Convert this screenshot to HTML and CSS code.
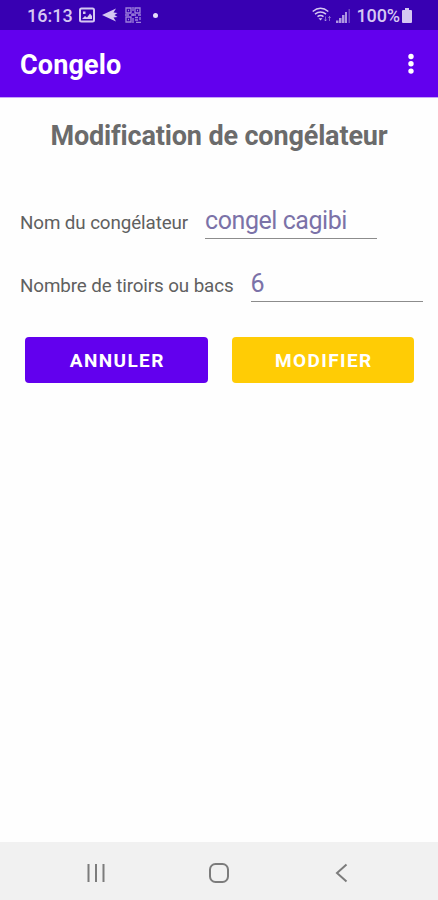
FILE: index.html
```html
<!DOCTYPE html>
<html lang="fr">
	<head>
		<meta charset="utf-8">
		<title>Congelo</title>
		<link rel="stylesheet" href="styles.css">
	</head>
	<body>
		<div class="status-bar">
			<span class="time">16:13</span>
			<svg class="icon-image" width="16" height="16" viewBox="0 0 16 16">
				<rect x="1" y="1.500" width="14" height="13" rx="1.500" fill="none" stroke="currentColor" stroke-width="2"/>
				<path d="M3 12l3-3 2 1.500 3-4 2 2.500v3z" fill="currentColor"/>
				<rect x="4" y="4.500" width="2.500" height="2.500" fill="currentColor"/>
			</svg>
			<svg class="icon-plane" width="16" height="14" viewBox="0 0 16 14">
				<path d="M0 7L14 .5 11.500 4.500l4 .5-3 2 3 2-4 .5 2.500 4z" fill="currentColor"/>
			</svg>
			<svg class="icon-code" width="16" height="16" viewBox="0 0 16 16" fill="none" stroke="currentColor" stroke-width="1.300">
				<path d="M1 1h5v5H1zM10 1h5v5h-5zM1 10h5v5H1z"/>
				<path d="M3 3.500h1M12 3.500h1M3 12.500h1M8 0v4M8 6v3M0 8h4M6 8h5M13 8h3M8 11v5M10 10.500h3M15 10v3M10 13h3M11 15.500h5"/>
			</svg>
			<span class="dot"></span>
			<div class="status-right">
				<svg class="icon-wifi" width="20" height="16" viewBox="0 0 20 16" fill="none" stroke="currentColor" stroke-width="1.500">
					<path d="M.7 4.500Q8.500 -2 16.300 4.500M3 7.200Q8.500 2.800 14 7.200M5.500 9.700Q8.500 7.500 11.500 9.700"/>
					<path d="M6.500 11.300h4L8.500 13.500z" fill="currentColor" stroke="none"/>
					<path d="M13.500 9.500v4.500M12.300 12.500l1.200 1.500 1.200-1.500M17.500 14V9.500M16.300 11l1.200-1.500 1.200 1.500" stroke-width=".8" opacity=".6"/>
				</svg>
				<svg class="icon-signal" width="14" height="14" viewBox="0 0 14 14" fill="currentColor">
					<path d="M0 11.500h2.500V14H0zM3 9h2.500v5H3zM6 6h2.500v8H6zM9 3h2v11H9z" opacity=".75"/>
					<path d="M12.500 0H14v14h-1.500z" opacity=".35"/>
				</svg>
				<span class="percent">100%</span>
				<svg width="10" height="15" viewBox="0 0 10 15" fill="currentColor">
					<path d="M3 0h4v2h2q1 0 1 1v11q0 1-1 1H1q-1 0-1-1V3q0-1 1-1h2z"/>
				</svg>
			</div>
		</div>

		<header class="app-bar">
			<span class="app-name">Congelo</span>
			<svg width="6" height="22" viewBox="0 0 6 22" fill="#fff">
				<circle cx="3" cy="3.500" r="2.700"/>
				<circle cx="3" cy="10.800" r="2.700"/>
				<circle cx="3" cy="18.100" r="2.700"/>
			</svg>
		</header>

		<main>
			<h1>Modification de congélateur</h1>
			<form>
				<div class="field">
					<label for="nom">Nom du congélateur</label>
					<input id="nom" type="text" value="congel cagibi">
				</div>
				<div class="field">
					<label for="bacs">Nombre de tiroirs ou bacs</label>
					<input id="bacs" type="text" value="6">
				</div>
				<div class="buttons">
					<button type="button" class="cancel">ANNULER</button>
					<button type="button" class="edit">MODIFIER</button>
				</div>
			</form>
		</main>

		<nav class="nav-bar">
			<svg width="20" height="20" viewBox="0 0 20 20">
				<path d="M2.500 1v18M10 1v18M17.500 1v18"/>
			</svg>
			<svg width="20" height="20" viewBox="0 0 20 20">
				<rect x="1" y="1" width="18" height="18" rx="5.500"/>
			</svg>
			<svg width="20" height="20" viewBox="0 0 20 20">
				<path d="M14.500 1.500L5 10l9.500 8.500"/>
			</svg>
		</nav>
	</body>
</html>
```

FILE: styles.css
```css
* {
	box-sizing: border-box;
}
body {
	margin: 0;
	height: 100vh;
	display: flex;
	flex-direction: column;
	background: #fefefe;
	font-family: Roboto, "Liberation Sans", sans-serif;
}

.status-bar {
	height: 30px;
	padding: 0 26px 0 27px;
	display: flex;
	align-items: center;
	background: #3800b2;
	color: #d5c8f2;
	font-size: 18px;
	font-weight: 500;
}
.time {
	width: 45px;
}
.icon-image {
	margin-left: 7px;
}
.icon-plane {
	margin-left: 7px;
}
.icon-code {
	margin-left: 7px;
	opacity: 0.65;
}
.dot {
	width: 5px;
	height: 5px;
	margin-left: 12px;
	border-radius: 50%;
	background: #e6ddfa;
}
.status-right {
	margin-left: auto;
	display: flex;
	align-items: center;
}
.icon-signal {
	margin: 2px 6px 0 4px;
}
.percent {
	margin-right: 2px;
	letter-spacing: -0.1px;
}

.app-bar {
	height: 68px;
	padding: 0 24px 0 20px;
	display: flex;
	align-items: center;
	justify-content: space-between;
	background: #6200ee;
	border-bottom: 1px solid #c4a4f8;
	color: #fff;
}
.app-name {
	padding-top: 3px;
	font-size: 27px;
	font-weight: 700;
	letter-spacing: 0.15px;
}

main {
	flex: 1;
	padding: 21px 14px 0 20px;
}
h1 {
	margin: 0 0 49px;
	padding-right: 6px;
	font-size: 27px;
	line-height: 34px;
	font-weight: 700;
	letter-spacing: -0.15px;
	text-align: center;
	white-space: nowrap;
	color: #6b6b6b;
}
.field {
	display: flex;
	align-items: center;
	gap: 17px;
	height: 38px;
	margin-bottom: 25px;
}
.field label {
	padding-top: 3px;
	font-size: 18.8px;
	letter-spacing: -0.1px;
	white-space: nowrap;
	color: #606060;
}
.field input {
	width: 172px;
	height: 36px;
	padding: 0;
	border: none;
	border-bottom: 1px solid #8c8c8c;
	outline: none;
	background: none;
	font-family: inherit;
	font-size: 25px;
	letter-spacing: -0.45px;
	color: #7b72a8;
}

.buttons {
	display: flex;
	gap: 24px;
	padding: 9px 0 0 5px;
}
.buttons button {
	width: 182.5px;
	height: 46px;
	padding: 0 0 0 2px;
	border: none;
	border-radius: 4px;
	color: #fff;
	font-family: inherit;
	font-size: 19px;
	font-weight: 700;
	letter-spacing: 1.4px;
}
.cancel {
	background: #6200ee;
}
.buttons .edit {
	background: #ffcc05;
}

.nav-bar {
	height: 58px;
	padding: 4px 86px 0;
	display: flex;
	align-items: center;
	justify-content: space-between;
	background: #f1f1f1;
}
.nav-bar svg {
	fill: none;
	stroke: #7c7c7c;
	stroke-width: 2;
}
```
